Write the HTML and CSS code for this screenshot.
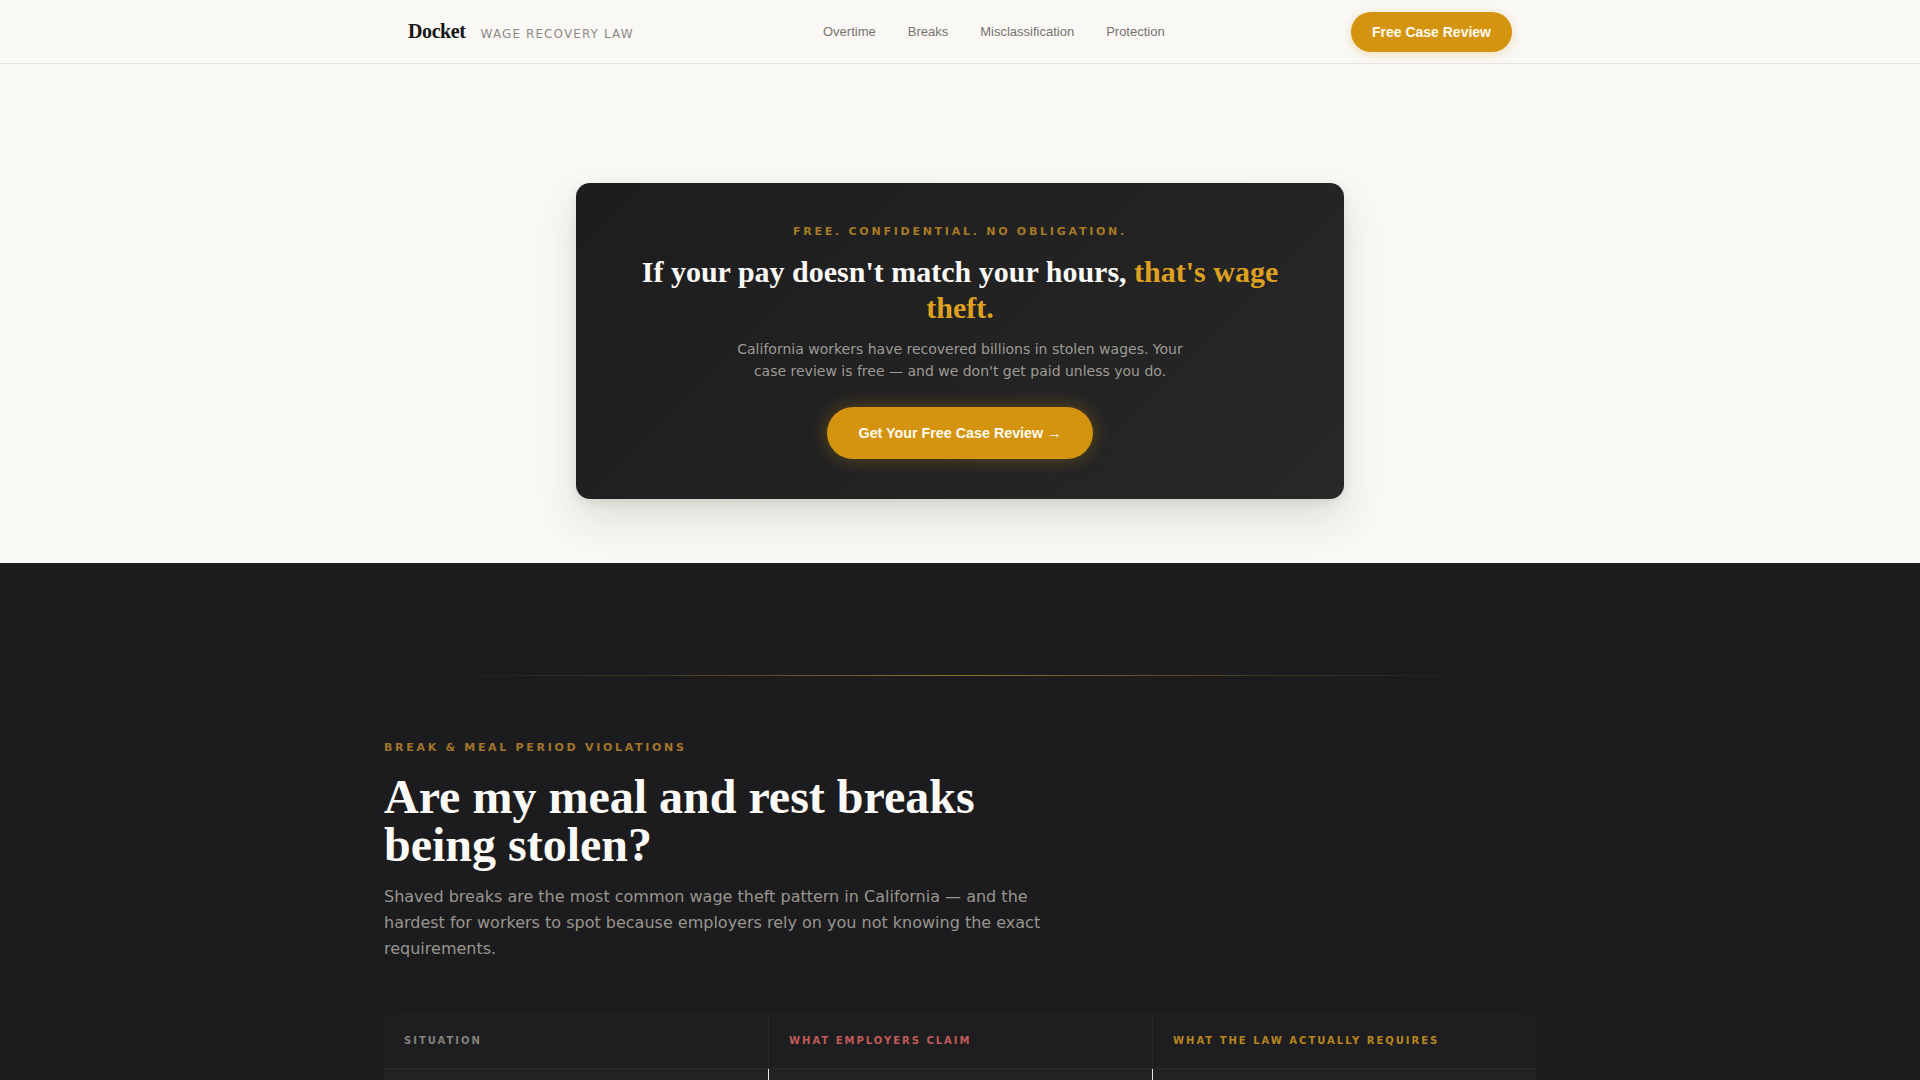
FILE: index.html
```html
<!DOCTYPE html>
<html lang="en">
<head>
<meta charset="utf-8">
<title>Docket — Wage Recovery Law</title>
<link rel="stylesheet" href="styles.css">
</head>
<body>
<header class="nav">
  <div class="nav-inner">
    <div class="brand">
      <span class="brand-name">Docket</span>
      <span class="brand-tag">WAGE RECOVERY LAW</span>
    </div>
    <nav class="links">
      <a href="#">Overtime</a>
      <a href="#">Breaks</a>
      <a href="#">Misclassification</a>
      <a href="#">Protection</a>
    </nav>
    <a class="btn btn-nav" href="#">Free Case Review</a>
  </div>
</header>

<section class="hero">
  <div class="card">
    <p class="eyebrow">FREE. CONFIDENTIAL. NO OBLIGATION.</p>
    <h1 class="card-title">If your pay doesn't match your hours, <span class="gold">that's wage theft.</span></h1>
    <p class="card-text">California workers have recovered billions in stolen wages. Your case review is free — and we don't get paid unless you do.</p>
    <a class="btn btn-cta" href="#">Get Your Free Case Review →</a>
  </div>
</section>

<section class="dark">
  <div class="divider"></div>
  <div class="container">
    <p class="eyebrow eyebrow-left">BREAK &amp; MEAL PERIOD VIOLATIONS</p>
    <h2 class="section-title">Are my meal and rest breaks being stolen?</h2>
    <p class="section-text">Shaved breaks are the most common wage theft pattern in California — and the hardest for workers to spot because employers rely on you not knowing the exact requirements.</p>
    <div class="table">
      <div class="row head">
        <div class="cell th th-grey">SITUATION</div>
        <div class="cell th th-red">WHAT EMPLOYERS CLAIM</div>
        <div class="cell th th-gold">WHAT THE LAW ACTUALLY REQUIRES</div>
      </div>
      <div class="row body">
        <div class="cell td"></div>
        <div class="cell td"></div>
        <div class="cell td"></div>
      </div>
    </div>
  </div>
</section>
</body>
</html>
```

FILE: styles.css
```css
* { box-sizing: border-box; }
html, body { margin: 0; padding: 0; }
body {
  background: #f9f8f5;
  font-family: "DejaVu Sans", sans-serif;
  color: #1c1c1e;
}
a { text-decoration: none; }
p { margin: 0; }
h1, h2 { margin: 0; }

.nav {
  height: 64px;
  border-bottom: 1px solid #e7e4de;
  background: #f9f8f5;
}
.nav-inner {
  max-width: 1152px;
  margin: 0 auto;
  padding: 0 24px;
  height: 100%;
  display: flex;
  align-items: center;
}
.brand { display: flex; align-items: baseline; gap: 15px; width: 300px; }
.brand-name {
  font-family: "Liberation Serif", serif;
  font-weight: 700;
  font-size: 20px;
  letter-spacing: -0.4px;
  color: #151515;
}
.brand-tag {
  font-size: 12px;
  letter-spacing: 1.1px;
  color: #8d8a85;
}
.links { display: flex; gap: 32px; margin-left: 115px; }
.links a {
  font-family: "Liberation Sans", sans-serif;
  font-size: 13px;
  color: #77736e;
}
.btn {
  font-family: "Liberation Sans", sans-serif;
  font-weight: 700;
  color: #fffaf0;
  background: #d4940f;
  border-radius: 999px;
  display: inline-block;
}
.btn-nav {
  margin-left: auto;
  font-size: 14px;
  padding: 11px 21px;
  line-height: 18px;
  box-shadow: 0 2px 10px rgba(212, 148, 15, 0.28);
}

.hero {
  padding: 119px 0 64px;
  display: flex;
  justify-content: center;
}
.card {
  width: 768px;
  border-radius: 14px;
  background: linear-gradient(135deg, #1d1d1f 0%, #222223 50%, #282828 100%);
  padding: 41.5px 48px 40.5px;
  text-align: center;
  box-shadow: 0 20px 40px rgba(40, 30, 10, 0.12), 0 4px 12px rgba(0, 0, 0, 0.08);
}
.eyebrow {
  font-size: 11px;
  line-height: 13px;
  font-weight: 700;
  letter-spacing: 2.75px;
  color: #a87a22;
}
.card-title {
  margin-top: 16px;
  font-family: "Liberation Serif", serif;
  font-size: 30px;
  line-height: 36px;
  font-weight: 700;
  color: #fbf9f5;
}
.gold { color: #dea020; }
.card-text {
  margin: 12px auto 0;
  max-width: 460px;
  font-size: 14px;
  line-height: 22px;
  color: #9e9a94;
}
.btn-cta {
  margin-top: 25px;
  font-size: 14.3px;
  line-height: 20px;
  padding: 16px 32px;
  box-shadow: 0 0 18px rgba(212, 148, 15, 0.35);
}

.dark {
  background: #1c1c1e;
  padding-top: 112px;
  min-height: 600px;
}
.divider {
  height: 1px;
  max-width: 1060px;
  margin: 0 auto;
  background: linear-gradient(90deg, rgba(168,122,34,0) 0%, rgba(168,122,34,0.25) 20%, rgba(200,150,50,0.7) 50%, rgba(168,122,34,0.25) 80%, rgba(168,122,34,0) 100%);
}
.container {
  max-width: 1152px;
  margin: 0 auto;
  padding-top: 65px;
}
.eyebrow-left { letter-spacing: 2.7px; color: #a3762a; }
.section-title {
  margin-top: 19px;
  max-width: 672px;
  font-family: "Liberation Serif", serif;
  font-size: 48px;
  line-height: 48px;
  font-weight: 700;
  color: #fbf9f5;
}
.section-text {
  margin-top: 15px;
  max-width: 672px;
  font-size: 16px;
  line-height: 26px;
  color: #99958f;
}
.table {
  margin-top: 53px;
  border-radius: 12px 12px 0 0;
  overflow: hidden;
  background: #1e1e20;
  box-shadow: 0 0 0 1px rgba(255,255,255,0.02);
}
.row { display: grid; grid-template-columns: 1fr 1fr 1fr; }
.head { border-bottom: 1px solid #2c2c2e; }
.cell { padding: 19px 20px 20px; }
.head .cell + .cell { border-left: 1px solid #29292b; }
.th {
  font-size: 10px;
  line-height: 14px;
  font-weight: 700;
  letter-spacing: 2px;
}
.th-grey { color: #85817b; }
.th-red { color: #c25a55; }
.th-gold { color: #b7861f; }
.body { background: #232325; }
.td { height: 60px; }
.body .cell + .cell { border-left: 1px solid #e8e8e8; }
```
